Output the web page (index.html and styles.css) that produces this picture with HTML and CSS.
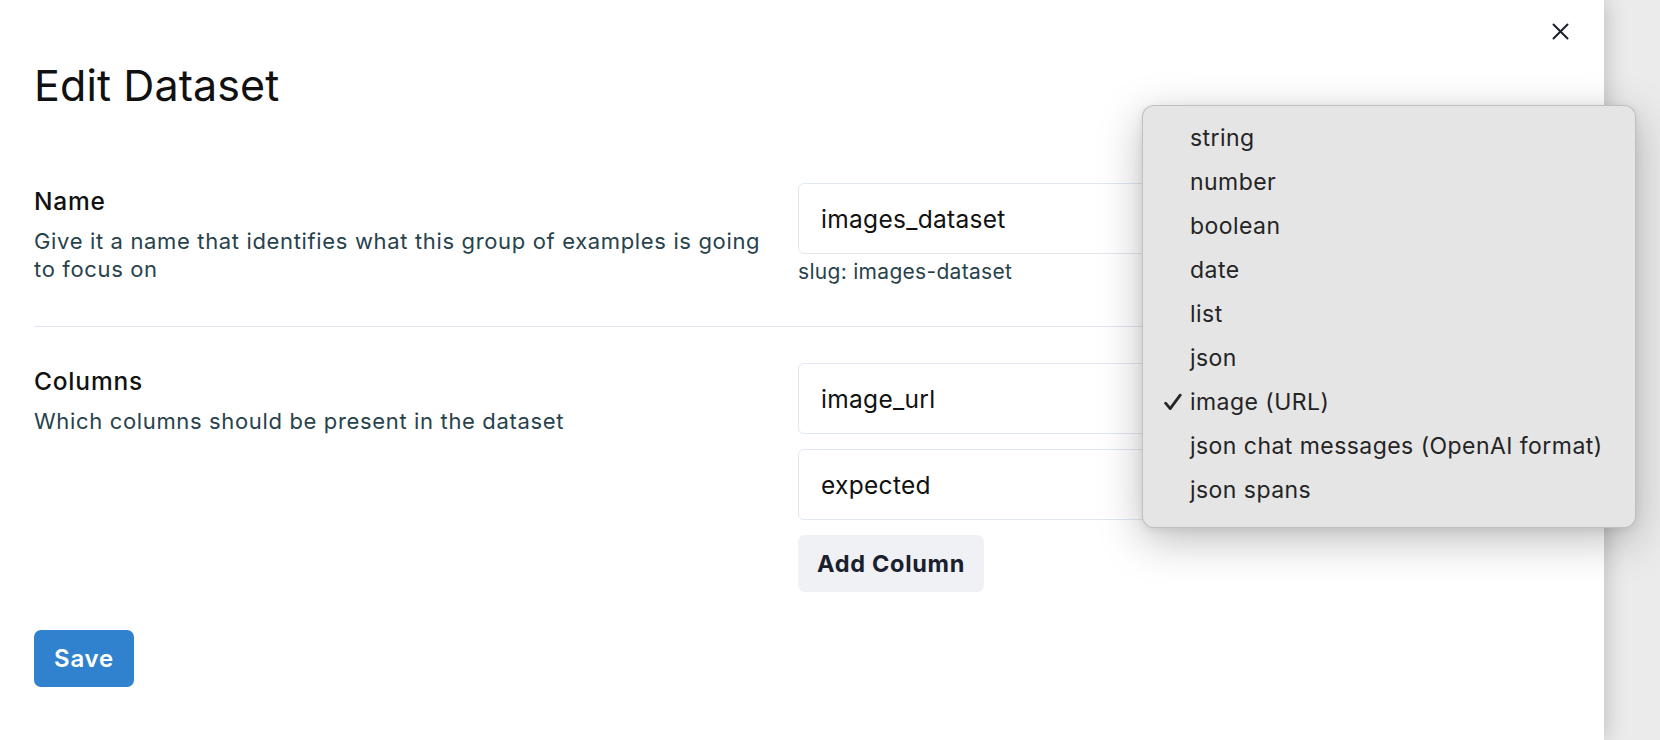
FILE: index.html
```html
<!DOCTYPE html>
<html lang="en">
<head>
<meta charset="utf-8">
<title>Edit Dataset</title>
<link rel="stylesheet" href="styles.css">
</head>
<body>
<div class="page">
  <div class="modal">
    <button class="close" aria-label="Close">
      <svg width="17" height="17" viewBox="0 0 17 17"><path d="M1.5 1.5 L15.5 15.5 M15.5 1.5 L1.5 15.5" stroke="#1A202C" stroke-width="2" stroke-linecap="round"/></svg>
    </button>
    <h1 class="title">Edit Dataset</h1>

    <section class="row">
      <div class="info">
        <div class="label">Name</div>
        <p class="desc">Give it a name that identifies what this group of examples is going to focus on</p>
      </div>
      <div class="field">
        <input class="input" type="text" value="images_dataset">
        <div class="slug">slug: images-dataset</div>
      </div>
    </section>

    <hr class="divider">

    <section class="row">
      <div class="info">
        <div class="label">Columns</div>
        <p class="desc">Which columns should be present in the dataset</p>
      </div>
      <div class="field stack">
        <div class="col-row">
          <input class="input" type="text" value="image_url">
          <div class="select" aria-label="image (URL)"></div>
        </div>
        <div class="col-row">
          <input class="input" type="text" value="expected">
          <div class="select" aria-label="string"></div>
        </div>
        <div><button class="btn btn-secondary">Add Column</button></div>
      </div>
    </section>

    <button class="btn btn-primary">Save</button>
  </div>

  <ul class="menu">
    <li class="item">string</li>
    <li class="item">number</li>
    <li class="item">boolean</li>
    <li class="item">date</li>
    <li class="item">list</li>
    <li class="item">json</li>
    <li class="item checked">
      <svg class="check" width="18" height="18" viewBox="0 0 18 18"><path d="M1.6 10.2 L6.2 15.6 L16.2 2.2" fill="none" stroke="#262626" stroke-width="2.8" stroke-linecap="round" stroke-linejoin="round"/></svg>
      image (URL)
    </li>
    <li class="item">json chat messages (OpenAI format)</li>
    <li class="item">json spans</li>
  </ul>
</div>
</body>
</html>
```

FILE: styles.css
```css
* { box-sizing: border-box; }

html, body {
  margin: 0;
  padding: 0;
}

body {
  width: 1660px;
  height: 740px;
  overflow: hidden;
  background: #ebebeb;
  font-family: Inter, "Noto Sans", sans-serif;
  color: #111;
}

.page {
  position: relative;
  width: 1660px;
  height: 740px;
}

.modal {
  position: relative;
  width: 1604px;
  height: 740px;
  background: #fff;
  box-shadow: 0 0 22px rgba(0, 0, 0, 0.22);
  padding: 61px 34px 0 34px;
}

.close {
  position: absolute;
  top: 15px;
  right: 28px;
  width: 32px;
  height: 32px;
  border: 0;
  background: transparent;
  padding: 0;
  display: flex;
  align-items: center;
  justify-content: center;
}

.title {
  margin: 0 0 74px 0;
  font-size: 43px;
  line-height: 48px;
  font-weight: 400;
  color: #111;
  letter-spacing: 0.1px;
}

.row {
  display: grid;
  grid-template-columns: 740px 1fr;
  column-gap: 24px;
  align-items: start;
}

.label {
  font-size: 24.5px;
  line-height: 36px;
  font-weight: 500;
  letter-spacing: 0.8px;
  color: #111;
}

.desc {
  margin: 8px 0 0 0;
  font-size: 22px;
  line-height: 28px;
  letter-spacing: 0.65px;
  color: #28424c;
}

.field {
  display: flex;
  flex-direction: column;
}

.stack {
  gap: 15px;
}

.input {
  width: 100%;
  height: 71px;
  border: 1px solid #e2e8f0;
  border-radius: 6px;
  padding: 0 22px;
  font-family: Inter, "Noto Sans", sans-serif;
  font-size: 24.5px;
  letter-spacing: 0.3px;
  color: #111;
  background: #fff;
  outline: none;
}

.slug {
  margin-top: 4px;
  font-size: 21px;
  line-height: 28px;
  letter-spacing: 0.3px;
  color: #28424c;
}

.col-row {
  display: flex;
  gap: 12px;
}

.col-row .input {
  flex: 1;
}

.select {
  width: 300px;
  flex: none;
  height: 71px;
  border: 1px solid #e2e8f0;
  border-radius: 6px;
}

.divider {
  margin: 40px 0 36px 0;
  border: 0;
  border-top: 1px solid #e2e5ef;
  height: 0;
}

.btn {
  height: 57px;
  border: 0;
  border-radius: 7px;
  font-family: Inter, "Noto Sans", sans-serif;
  font-weight: 600;
}

.btn-secondary {
  background: #eff1f5;
  color: #1a202c;
  font-weight: 700;
  font-size: 23.5px;
  letter-spacing: 0.7px;
  padding: 0 19px;
}

.btn-primary {
  margin-top: 38px;
  background: #3182ce;
  color: #fff;
  width: 100px;
  padding: 0;
  font-size: 24px;
  letter-spacing: 0.8px;
}

.menu {
  position: absolute;
  left: 1142px;
  top: 105px;
  width: 494px;
  height: 423px;
  margin: 0;
  padding: 10px 0 15px 0;
  list-style: none;
  background: #e5e5e5;
  border: 1px solid rgba(0, 0, 0, 0.16);
  border-radius: 12px;
  box-shadow: 0 12px 44px rgba(0, 0, 0, 0.26), 0 2px 8px rgba(0, 0, 0, 0.08);
}

.item {
  position: relative;
  height: 44px;
  line-height: 44px;
  padding-left: 47px;
  font-size: 23px;
  letter-spacing: 0.45px;
  color: #242424;
}

.check {
  position: absolute;
  left: 21px;
  top: 13px;
}
```
